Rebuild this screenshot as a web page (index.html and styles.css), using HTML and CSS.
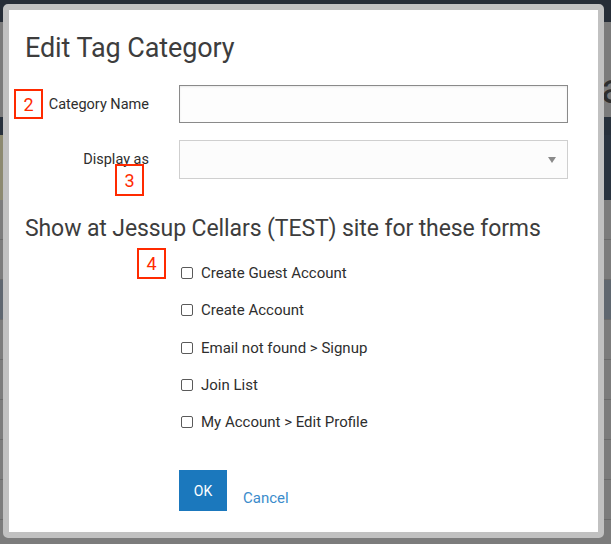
FILE: index.html
```html
<!DOCTYPE html>
<html>
<head>
<meta charset="utf-8">
<link rel="stylesheet" href="styles.css">
</head>
<body>
<div class="page">
  <div class="bg-top"></div>
  <div class="bg-gray bg-h95"><span class="bg-letter">a</span></div>
  <div class="bg-dark"></div>
  <div class="bg-khaki"></div>
  <div class="bg-row"></div>
  <div class="bg-row"></div>
  <div class="bg-row bg-slate"></div>
  <div class="bg-row"></div>
  <div class="bg-row"></div>
  <div class="bg-row"></div>
  <div class="bg-row"></div>
  <div class="bg-row"></div>
  <div class="bg-row"></div>
</div>

<div class="backdrop">
  <div class="dialog">
    <h1 class="title">Edit Tag Category</h1>

    <div class="form-grid">
      <label class="label" for="catname">Category Name</label>
      <input id="catname" class="text-input" type="text">
      <label class="label">Display as</label>
      <div class="select">
        <span class="arrow"></span>
      </div>
    </div>

    <h2 class="subtitle">Show at Jessup Cellars (TEST) site for these forms</h2>

    <ul class="checks">
      <li><span class="box"></span>Create Guest Account</li>
      <li><span class="box"></span>Create Account</li>
      <li><span class="box"></span>Email not found &gt; Signup</li>
      <li><span class="box"></span>Join List</li>
      <li><span class="box"></span>My Account &gt; Edit Profile</li>
    </ul>

    <div class="actions">
      <button class="btn-ok">OK</button>
      <a class="btn-cancel">Cancel</a>
    </div>

    <span class="anno anno-2">2</span>
    <span class="anno anno-3">3</span>
    <span class="anno anno-4">4</span>
  </div>
</div>
</body>
</html>
```

FILE: styles.css
```css
html, body {
  margin: 0;
  padding: 0;
}
body {
  width: 611px;
  height: 544px;
  overflow: hidden;
  background: #7a7a7a;
  font-family: Roboto, "Liberation Sans", sans-serif;
  position: relative;
}

/* dimmed page behind the dialog */
.page {
  display: flex;
  flex-direction: column;
}
.bg-top { height: 22px; background: #262d37; }
.bg-gray { background: #7b7b7b; position: relative; }
.bg-h95 { height: 95px; }
.bg-letter {
  position: absolute;
  left: 601px;
  top: 42px;
  font-size: 42px;
  line-height: 50px;
  color: #2e2e2e;
}
.bg-dark { height: 18px; background: #28313c; }
.bg-khaki {
  height: 65px;
  background: linear-gradient(to right, #8d8a70 0, #8d8a70 300px, #2a3440 300px);
}
.bg-row {
  height: 39px;
  background: #7c7c7c;
  border-bottom: 1px solid #6a6a6a;
}
.bg-slate { background: #5f6770; }

/* overlay + dialog */
.backdrop {
  position: absolute;
  inset: 0;
  padding: 4px 7px 6px 3px;
  box-sizing: border-box;
}
.dialog {
  position: relative;
  height: 100%;
  box-sizing: border-box;
  background: #fff;
  border: 6px solid #c1c1c1;
  border-radius: 5px;
  padding: 22px 0 0 0;
  color: #333;
}

.title {
  margin: 0 0 0 16px;
  font-size: 27px;
  font-weight: 400;
  line-height: 32px;
  color: #3d3d3d;
  letter-spacing: -0.1px;
}

.form-grid {
  display: grid;
  grid-template-columns: 170px 389px;
  row-gap: 17px;
  margin-top: 21px;
  align-items: center;
}
.label {
  text-align: right;
  padding-right: 30px;
  font-size: 14.5px;
  color: #2e2e2e;
}
.text-input {
  box-sizing: border-box;
  height: 38px;
  width: 389px;
  border: 1px solid #8a8a8a;
  background: #fdfdfd;
  box-shadow: inset 0 1px 2px rgba(0,0,0,0.08);
  margin: 0;
  padding: 0 8px;
  outline: none;
}
.select {
  box-sizing: border-box;
  height: 39px;
  border: 1px solid #cfcfcf;
  background: #fcfcfc;
  display: flex;
  align-items: center;
  justify-content: flex-end;
  padding-right: 11px;
}
.arrow {
  width: 0;
  height: 0;
  border-left: 4px solid transparent;
  border-right: 4px solid transparent;
  border-top: 6px solid #8a8a8a;
}

.subtitle {
  margin: 36px 0 0 16px;
  font-size: 23px;
  font-weight: 400;
  line-height: 28px;
  color: #3d3d3d;
  letter-spacing: -0.1px;
}

.checks {
  list-style: none;
  margin: 19px 0 0 171px;
  padding: 0;
  display: flex;
  flex-direction: column;
  gap: 15.3px;
}
.checks li {
  display: flex;
  align-items: center;
  height: 22px;
  font-size: 15px;
  color: #2e2e2e;
}
.box {
  box-sizing: border-box;
  width: 12px;
  height: 12px;
  border: 1px solid #5a5a5a;
  border-radius: 2px;
  background: #fff;
  margin: 0 8px 0 1px;
}

.actions {
  display: flex;
  align-items: flex-start;
  margin: 37px 0 0 170px;
  gap: 16px;
}
.btn-ok {
  width: 48px;
  height: 41px;
  border: 0;
  background: #1b78bd;
  color: #fff;
  font-family: Roboto, "Liberation Sans", sans-serif;
  font-size: 14px;
  padding: 0;
  margin: 0;
}
.btn-cancel {
  font-size: 15px;
  color: #3b8ccb;
  margin-top: 19px;
}

.anno {
  position: absolute;
  box-sizing: border-box;
  width: 29px;
  height: 30px;
  border: 2px solid #ff2a00;
  color: #ff2a00;
  font-size: 18px;
  display: flex;
  align-items: center;
  justify-content: center;
  font-family: Roboto, "Liberation Sans", sans-serif;
}
.anno-2 { left: 5px; top: 79px; }
.anno-3 { left: 106px; top: 154px; height: 32px; }
.anno-4 { left: 128px; top: 238px; height: 31px; }
```
